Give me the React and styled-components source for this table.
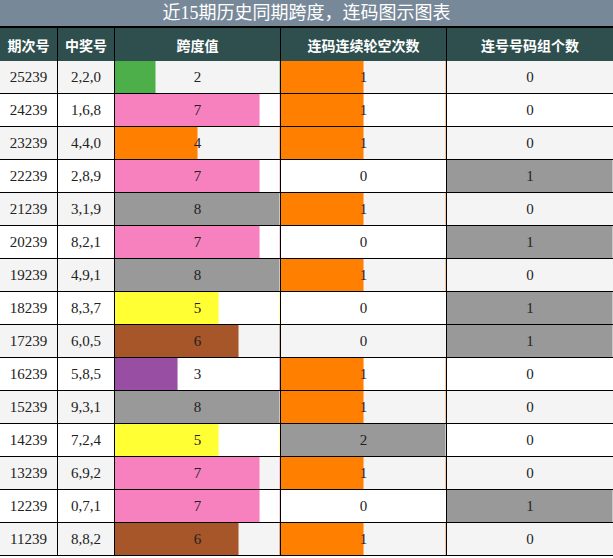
import styled, { createGlobalStyle } from "styled-components";

const GlobalStyle = createGlobalStyle`
  html, body {
    margin: 0;
    padding: 0;
    background: #ffffff;
  }
`;

const ROWS = [
  ["25239", "2,2,0", 2, 1, 0],
  ["24239", "1,6,8", 7, 1, 0],
  ["23239", "4,4,0", 4, 1, 0],
  ["22239", "2,8,9", 7, 0, 1],
  ["21239", "3,1,9", 8, 1, 0],
  ["20239", "8,2,1", 7, 0, 1],
  ["19239", "4,9,1", 8, 1, 0],
  ["18239", "8,3,7", 5, 0, 1],
  ["17239", "6,0,5", 6, 0, 1],
  ["16239", "5,8,5", 3, 1, 0],
  ["15239", "9,3,1", 8, 1, 0],
  ["14239", "7,2,4", 5, 2, 0],
  ["13239", "6,9,2", 7, 1, 0],
  ["12239", "0,7,1", 7, 0, 1],
  ["11239", "8,8,2", 6, 1, 0],
];

const SPAN_COLORS = {
  2: "#4daf4a",
  3: "#984ea3",
  4: "#ff7f00",
  5: "#ffff33",
  6: "#a65628",
  7: "#f781bf",
  8: "#999999",
};

const GAP_COLORS = { 1: "#ff7f00", 2: "#999999" };
const GROUP_COLORS = { 1: "#999999" };

const Page = styled.div`
  width: 613px;
  font-family: "Liberation Serif", "Noto Sans CJK SC", serif;
`;

const Title = styled.div`
  height: 26px;
  background: #778899;
  border-bottom: 2px solid #000;
  color: #ffffff;
  font-size: 18px;
  line-height: 26px;
  text-align: center;
  font-family: "Liberation Serif", "Noto Sans CJK SC", serif;
`;

const Grid = styled.div`
  display: grid;
  grid-template-columns: 57px 56px 165px 165px 166px;
  grid-auto-rows: 32px;
  gap: 1px;
  background: #000;
  border-bottom: 1px solid #000;
`;

const Head = styled.div`
  height: 33px;
  background: #2f4f4f;
  color: #ffffff;
  font-family: "Noto Sans CJK SC", sans-serif;
  font-weight: 700;
  font-size: 14px;
  display: flex;
  align-items: center;
  justify-content: center;
`;

const Cell = styled.div`
  position: relative;
  background: ${(p) => (p.$odd ? "#f4f4f4" : "#ffffff")};
  color: #222;
  font-size: 15px;
  display: flex;
  align-items: center;
  justify-content: center;
  overflow: hidden;
  box-shadow: ${(p) => (p.$edge ? `inset -1px 0 0 ${p.$edge}66` : "none")};
`;

const Bar = styled.div`
  position: absolute;
  left: 0;
  top: 0;
  bottom: 0;
  background: ${(p) => p.$color};
  box-shadow: inset -1px 0 0 rgba(255, 255, 255, 0.45);
`;

const Value = styled.span`
  position: relative;
`;

const BarCell = ({ value, max, color, odd }) => (
  <Cell $odd={odd} $edge={color}>
    {value > 0 && (
      <Bar
        $color={color}
        style={{ width: `${Math.round((value / max) * 100)}%` }}
      />
    )}
    <Value>{value}</Value>
  </Cell>
);

export default function App() {
  return (
    <Page>
      <GlobalStyle />
      <Title>近15期历史同期跨度，连码图示图表</Title>
      <Grid>
        <Head>期次号</Head>
        <Head>中奖号</Head>
        <Head>跨度值</Head>
        <Head>连码连续轮空次数</Head>
        <Head>连号号码组个数</Head>
        {ROWS.map(([issue, nums, span, gap, group], i) => {
          const odd = i % 2 === 0;
          return [
            <Cell key={`a${i}`} $odd={odd}>{issue}</Cell>,
            <Cell key={`b${i}`} $odd={odd}>{nums}</Cell>,
            <BarCell key={`c${i}`} value={span} max={8} color={SPAN_COLORS[span]} odd={odd} />,
            <BarCell key={`d${i}`} value={gap} max={2} color={GAP_COLORS[gap]} odd={odd} />,
            <BarCell key={`e${i}`} value={group} max={1} color={GROUP_COLORS[group]} odd={odd} />,
          ];
        })}
      </Grid>
    </Page>
  );
}
